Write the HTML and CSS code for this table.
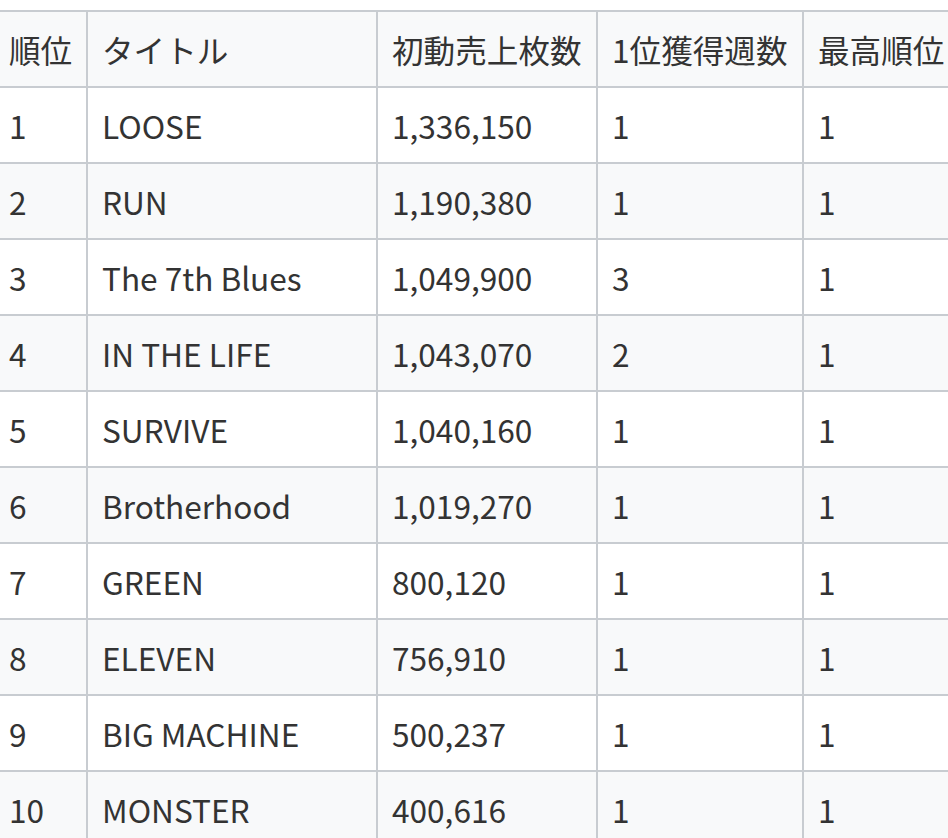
FILE: index.html
```html
<!DOCTYPE html>
<html lang="ja">
<head>
<meta charset="utf-8">
<title>ランキング</title>
<link rel="stylesheet" href="styles.css">
</head>
<body>
<div class="wrap">
<table class="rank">
<colgroup>
<col class="c1"><col class="c2"><col class="c3"><col class="c4"><col class="c5">
</colgroup>
<thead>
<tr><th>順位</th><th>タイトル</th><th>初動売上枚数</th><th>1位獲得週数</th><th>最高順位</th></tr>
</thead>
<tbody>
<tr><td>1</td><td>LOOSE</td><td>1,336,150</td><td>1</td><td>1</td></tr>
<tr><td>2</td><td>RUN</td><td>1,190,380</td><td>1</td><td>1</td></tr>
<tr><td>3</td><td>The 7th Blues</td><td>1,049,900</td><td>3</td><td>1</td></tr>
<tr><td>4</td><td>IN THE LIFE</td><td>1,043,070</td><td>2</td><td>1</td></tr>
<tr><td>5</td><td>SURVIVE</td><td>1,040,160</td><td>1</td><td>1</td></tr>
<tr><td>6</td><td>Brotherhood</td><td>1,019,270</td><td>1</td><td>1</td></tr>
<tr><td>7</td><td>GREEN</td><td>800,120</td><td>1</td><td>1</td></tr>
<tr><td>8</td><td>ELEVEN</td><td>756,910</td><td>1</td><td>1</td></tr>
<tr><td>9</td><td>BIG MACHINE</td><td>500,237</td><td>1</td><td>1</td></tr>
<tr><td>10</td><td>MONSTER</td><td>400,616</td><td>1</td><td>1</td></tr>
</tbody>
</table>
</div>
</body>
</html>
```
FILE: styles.css
```css
html, body {
  margin: 0;
  padding: 0;
  background: #ffffff;
  overflow: hidden;
}
body {
  font-family: "Noto Sans CJK JP", "Noto Sans", sans-serif;
  color: #333333;
  width: 948px;
  height: 838px;
}
.wrap {
  padding-top: 10px;
  margin-left: -7px;
  width: 1000px;
}
.rank {
  border-collapse: collapse;
  table-layout: fixed;
  width: 969px;
  font-size: 31.6px;
}
.c1 { width: 93px; }
.c2 { width: 290px; }
.c3 { width: 220px; }
.c4 { width: 206px; }
.c5 { width: 160px; }
.rank th,
.rank td {
  border: 2px solid #c8ccd1;
  padding: 15px 14px 15px 14px;
  line-height: 44px;
  text-align: left;
  font-weight: normal;
  white-space: nowrap;
  vertical-align: middle;
}
.rank thead th {
  background: #f8f9fa;
}
.rank tbody tr:nth-child(even) td {
  background: #f8f9fa;
}
```
